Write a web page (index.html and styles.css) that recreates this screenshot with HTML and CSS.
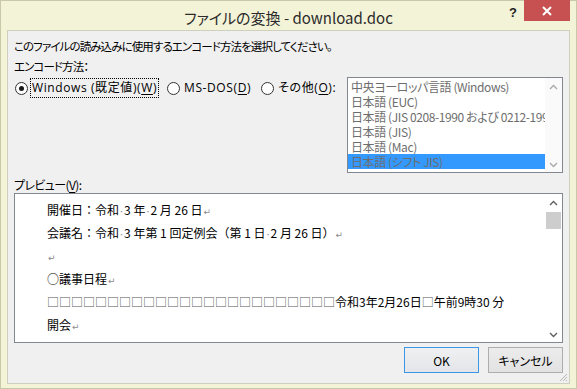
FILE: index.html
```html
<!DOCTYPE html>
<html lang="ja">
<head>
  <meta charset="UTF-8">
  <title>ファイルの変換 - download.doc</title>
  <link rel="stylesheet" href="styles.css">
</head>
<body>
  <div class="window">
    <!-- タイトルバー -->
    <div class="titlebar">
      <span class="title">ファイルの変換 - download.doc</span>
      <span class="help">?</span>
      <span class="close">
        <svg width="10" height="10" viewBox="0 0 10 10"><path d="M1 1L9 9M9 1L1 9" stroke="#fff" stroke-width="2"/></svg>
      </span>
    </div>

    <div class="client">
      <p class="line">このファイルの読み込みに使用するエンコード方法を選択してください。</p>
      <p class="line label">エンコード方法：</p>

      <div class="options">
        <div class="radios">
          <label class="radio">
            <span class="dot checked"></span>
            <span class="text focus">Windows (既定値)(<u>W</u>)</span>
          </label>
          <label class="radio">
            <span class="dot"></span>
            <span class="text">MS-DOS(<u>D</u>)</span>
          </label>
          <label class="radio">
            <span class="dot"></span>
            <span class="text">その他(<u>O</u>):</span>
          </label>
        </div>

        <div class="listbox">
          <ul class="items">
            <li>中央ヨーロッパ言語 (Windows)</li>
            <li>日本語 (EUC)</li>
            <li>日本語 (JIS 0208-1990 および 0212-1990)</li>
            <li>日本語 (JIS)</li>
            <li>日本語 (Mac)</li>
            <li class="selected">日本語 (シフト JIS)</li>
          </ul>
          <div class="vscroll disabled">
            <svg width="9" height="6" viewBox="0 0 9 6"><path d="M1 5L4.5 1.5L8 5" fill="none" stroke="#a9a9a9" stroke-width="1.4"/></svg>
            <svg width="9" height="6" viewBox="0 0 9 6"><path d="M1 1L4.5 4.5L8 1" fill="none" stroke="#a9a9a9" stroke-width="1.4"/></svg>
          </div>
        </div>
      </div>

      <p class="preview-label">プレビュー(<u>V</u>):</p>

      <div class="preview">
        <div class="doc">
          <p>開催日：令和<span class="sp">·</span>3 年<span class="sp">·</span>2 月 26 日<span class="ret">↵</span></p>
          <p>会議名：令和<span class="sp">·</span>3 年第 1 回定例会（第 1 日<span class="sp">·</span>2 月 26 日）<span class="ret">↵</span></p>
          <p><span class="ret">↵</span></p>
          <p>○議事日程<span class="ret">↵</span></p>
          <p><span class="box">□□□□□□□□□□□□□□□□□□□□□□□□</span>令和3年2月26日<span class="box">□</span>午前9時30 分</p>
          <p>開会<span class="ret">↵</span></p>
        </div>
        <div class="vscroll">
          <svg width="9" height="6" viewBox="0 0 9 6"><path d="M1 5L4.5 1.5L8 5" fill="none" stroke="#606060" stroke-width="1.4"/></svg>
          <span class="thumb"></span>
          <span class="track"></span>
          <svg width="9" height="6" viewBox="0 0 9 6"><path d="M1 1L4.5 4.5L8 1" fill="none" stroke="#606060" stroke-width="1.4"/></svg>
        </div>
      </div>

      <div class="buttons">
        <button class="btn default">OK</button>
        <button class="btn">キャンセル</button>
      </div>

      <span class="grip">
        <svg width="9" height="9" viewBox="0 0 9 9"><path d="M8 1L1 8M8 4L4 8M8 7L7 8" stroke="#b8b8b8" stroke-width="1"/></svg>
      </span>
    </div>
  </div>
</body>
</html>
```

FILE: styles.css
```css
/* 全体 */
* {
  box-sizing: border-box;
}
body {
  margin: 0;
  font-family: "Noto Sans CJK JP", "Noto Sans", sans-serif;
  font-size: 12px;
  color: #000;
  background: #f3f3d7;
}
p {
  margin: 0;
}
u {
  text-decoration-thickness: 1px;
  text-underline-offset: 2px;
}

/* ウィンドウ枠 */
.window {
  width: 577px;
  height: 389px;
  border: 1px solid #c9c9aa;
  background: #f3f3d7;
  padding: 0 6px 4px 6px;
  display: flex;
  flex-direction: column;
  position: relative;
}
.titlebar {
  height: 29px;
  display: flex;
  justify-content: center;
  align-items: center;
}
.title {
  font-size: 15px;
  color: #2b2b2b;
  font-feature-settings: "palt";
  padding-top: 3px;
}
.help {
  position: absolute;
  left: 508px;
  top: 4px;
  font-family: "Liberation Sans", sans-serif;
  font-weight: bold;
  font-size: 13px;
  color: #222;
}
.close {
  position: absolute;
  left: 523px;
  top: -1px;
  width: 46px;
  height: 21px;
  background: #c75050;
  display: flex;
  align-items: center;
  justify-content: center;
}

/* クライアント領域 */
.client {
  flex: 1;
  border: 1px solid #cfcfbd;
  background: #f0f0f0;
  padding: 7px 6px 0 6px;
  position: relative;
  font-feature-settings: "palt";
}
.line {
  line-height: 16px;
  height: 16px;
  font-size: 11.5px;
  letter-spacing: -0.9px;
}
.label {
  margin-top: 4px;
}

.options {
  margin-top: 3px;
  display: flex;
  align-items: flex-start;
}
.radios {
  display: flex;
  gap: 8px;
  margin-top: 1px;
  margin-left: 1px;
  font-family: "Open Sans", "Noto Sans CJK JP", sans-serif;
  letter-spacing: 0.6px;
}
.radio {
  display: flex;
  align-items: center;
  height: 20px;
}
.dot {
  width: 13px;
  height: 13px;
  border: 1px solid #333;
  border-radius: 50%;
  background: #fff;
  margin-right: 2px;
  display: flex;
  align-items: center;
  justify-content: center;
}
.dot.checked::after {
  content: "";
  width: 5px;
  height: 5px;
  border-radius: 50%;
  background: #1a1a1a;
}
.text {
  border: 1px dotted transparent;
  padding: 0 1px;
  line-height: 18px;
  white-space: nowrap;
}
.text.focus {
  border-color: #000;
}

.listbox {
  margin-left: auto;
  width: 216px;
  height: 96px;
  border: 1px solid #828790;
  background: #fff;
  display: flex;
  overflow: hidden;
}
.items {
  list-style: none;
  margin: 0;
  padding: 1px 0 0;
  flex: 1;
  min-width: 0;
  overflow: hidden;
  color: #6d6d6d;
  letter-spacing: -0.4px;
}
.items li {
  height: 15px;
  line-height: 15px;
  padding-left: 3px;
  white-space: nowrap;
  overflow: hidden;
}
.items li.selected {
  background: #3399ff;
}

/* スクロールバー */
.vscroll {
  width: 17px;
  flex: none;
  display: flex;
  flex-direction: column;
  align-items: center;
  background: #fff;
  padding: 6px 0 4px;
}
.vscroll.disabled {
  justify-content: space-between;
  background: #fafafa;
}
.vscroll .thumb {
  width: 15px;
  height: 17px;
  background: #cdcdcd;
  margin-top: 6px;
}
.vscroll .track {
  flex: 1;
}

/* プレビュー */
.preview-label {
  margin-top: 3px;
  height: 17px;
  line-height: 17px;
  letter-spacing: -0.6px;
}
.preview {
  height: 150px;
  border: 1px solid #828790;
  background: #fff;
  display: flex;
  overflow: hidden;
}
.doc {
  flex: 1;
  min-width: 0;
  padding: 4px 0 0 32px;
  font-feature-settings: normal;
  white-space: nowrap;
  overflow: hidden;
}
.doc p {
  height: 23px;
  line-height: 23px;
}
.sp {
  color: #777;
  font-size: 9px;
}
.ret {
  color: #8a8a8a;
  font-family: "DejaVu Sans", sans-serif;
  font-size: 9px;
  margin-left: 1px;
}
.box {
  color: #555;
}

/* ボタン */
.buttons {
  margin-top: 4px;
  display: flex;
  justify-content: flex-end;
  gap: 9px;
}
.btn {
  width: 75px;
  height: 26px;
  font-family: "Noto Sans CJK JP", sans-serif;
  font-size: 12px;
  font-feature-settings: "palt";
  color: #000;
  border: 1px solid #adadad;
  background: linear-gradient(#ececec, #e2e2e2);
  padding: 0;
}
.btn.default {
  border-color: #3c96e6;
  background: linear-gradient(#eef0f2, #e3e5e8);
}
.grip {
  position: absolute;
  right: 1px;
  bottom: 1px;
  display: flex;
}
```
